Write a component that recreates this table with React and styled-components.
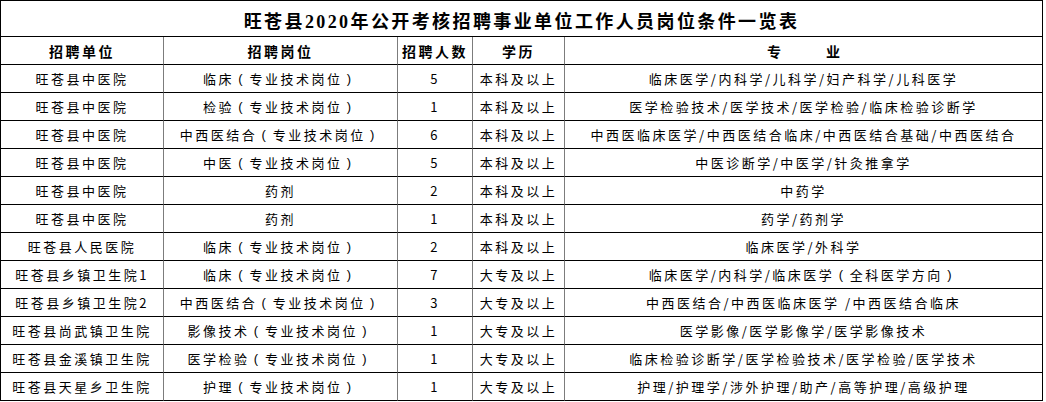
import React from 'react';
import styled, { createGlobalStyle } from 'styled-components';

const GlobalStyle = createGlobalStyle`
  html, body {
    margin: 0;
    padding: 0;
    background: #fff;
  }
`;

const Sheet = styled.div`
  display: grid;
  grid-template-columns: 163px 234px 75px 92px 478px;
  width: max-content;
  border-top: 1px solid #000;
  border-left: 1px solid #000;
  color: #000;
`;

const Title = styled.div`
  grid-column: 1 / -1;
  box-sizing: border-box;
  height: 36px;
  padding-top: 3px;
  display: flex;
  align-items: center;
  justify-content: center;
  border-right: 1px solid #000;
  border-bottom: 1px solid #000;
  font-family: "Liberation Serif", "Noto Sans CJK SC", serif;
  font-weight: 700;
  font-size: 18px;
  letter-spacing: 2.4px;
`;

const Cell = styled.div`
  box-sizing: border-box;
  height: 28px;
  display: flex;
  align-items: center;
  justify-content: center;
  white-space: nowrap;
  border-bottom: 1px solid #000;
  border-right: 1px solid ${(p) => (p.$last ? '#000' : '#7c7c7c')};
  font-family: "Noto Sans CJK SC", "Noto Sans", sans-serif;
  font-size: ${(p) => (p.$head ? '14px' : '13px')};
  font-weight: ${(p) => (p.$head ? 700 : 400)};
  letter-spacing: 2.5px;
`;

// full-width bracket drawn centred in its em box, as the sheet's font does
const Paren = styled.span`
  display: inline-block;
  width: 1em;
  margin-right: 2.5px;
  text-align: center;
  letter-spacing: 0;
  font-family: "Liberation Sans", sans-serif;
  font-weight: 400;
`;

const Wide = styled.span`
  letter-spacing: 45px;
  margin-right: -45px;
`;

const withParens = (text) =>
  text.split(/([（）])/).map((part, i) =>
    part === '（' || part === '）' ? (
      <Paren key={i}>{part === '（' ? '(' : ')'}</Paren>
    ) : (
      part
    )
  );

const heads = ['招聘单位', '招聘岗位', '招聘人数', '学历'];

const rows = [
  ['旺苍县中医院', '临床（专业技术岗位）', '5', '本科及以上', '临床医学/内科学/儿科学/妇产科学/儿科医学'],
  ['旺苍县中医院', '检验（专业技术岗位）', '1', '本科及以上', '医学检验技术/医学技术/医学检验/临床检验诊断学'],
  ['旺苍县中医院', '中西医结合（专业技术岗位）', '6', '本科及以上', '中西医临床医学/中西医结合临床/中西医结合基础/中西医结合'],
  ['旺苍县中医院', '中医（专业技术岗位）', '5', '本科及以上', '中医诊断学/中医学/针灸推拿学'],
  ['旺苍县中医院', '药剂', '2', '本科及以上', '中药学'],
  ['旺苍县中医院', '药剂', '1', '本科及以上', '药学/药剂学'],
  ['旺苍县人民医院', '临床（专业技术岗位）', '2', '本科及以上', '临床医学/外科学'],
  ['旺苍县乡镇卫生院1', '临床（专业技术岗位）', '7', '大专及以上', '临床医学/内科学/临床医学（全科医学方向）'],
  ['旺苍县乡镇卫生院2', '中西医结合（专业技术岗位）', '3', '大专及以上', '中西医结合/中西医临床医学 /中西医结合临床'],
  ['旺苍县尚武镇卫生院', '影像技术（专业技术岗位）', '1', '大专及以上', '医学影像/医学影像学/医学影像技术'],
  ['旺苍县金溪镇卫生院', '医学检验（专业技术岗位）', '1', '大专及以上', '临床检验诊断学/医学检验技术/医学检验/医学技术'],
  ['旺苍县天星乡卫生院', '护理（专业技术岗位）', '1', '大专及以上', '护理/护理学/涉外护理/助产/高等护理/高级护理'],
];

export default function App() {
  return (
    <>
      <GlobalStyle />
      <Sheet>
        <Title>旺苍县2020年公开考核招聘事业单位工作人员岗位条件一览表</Title>
        {heads.map((h) => (
          <Cell key={h} $head>
            {h}
          </Cell>
        ))}
        <Cell $head $last>
          <Wide>专业</Wide>
        </Cell>
        {rows.map((r, i) =>
          r.map((v, j) => (
            <Cell key={`${i}-${j}`} $last={j === r.length - 1}>
              {withParens(v)}
            </Cell>
          ))
        )}
      </Sheet>
    </>
  );
}
